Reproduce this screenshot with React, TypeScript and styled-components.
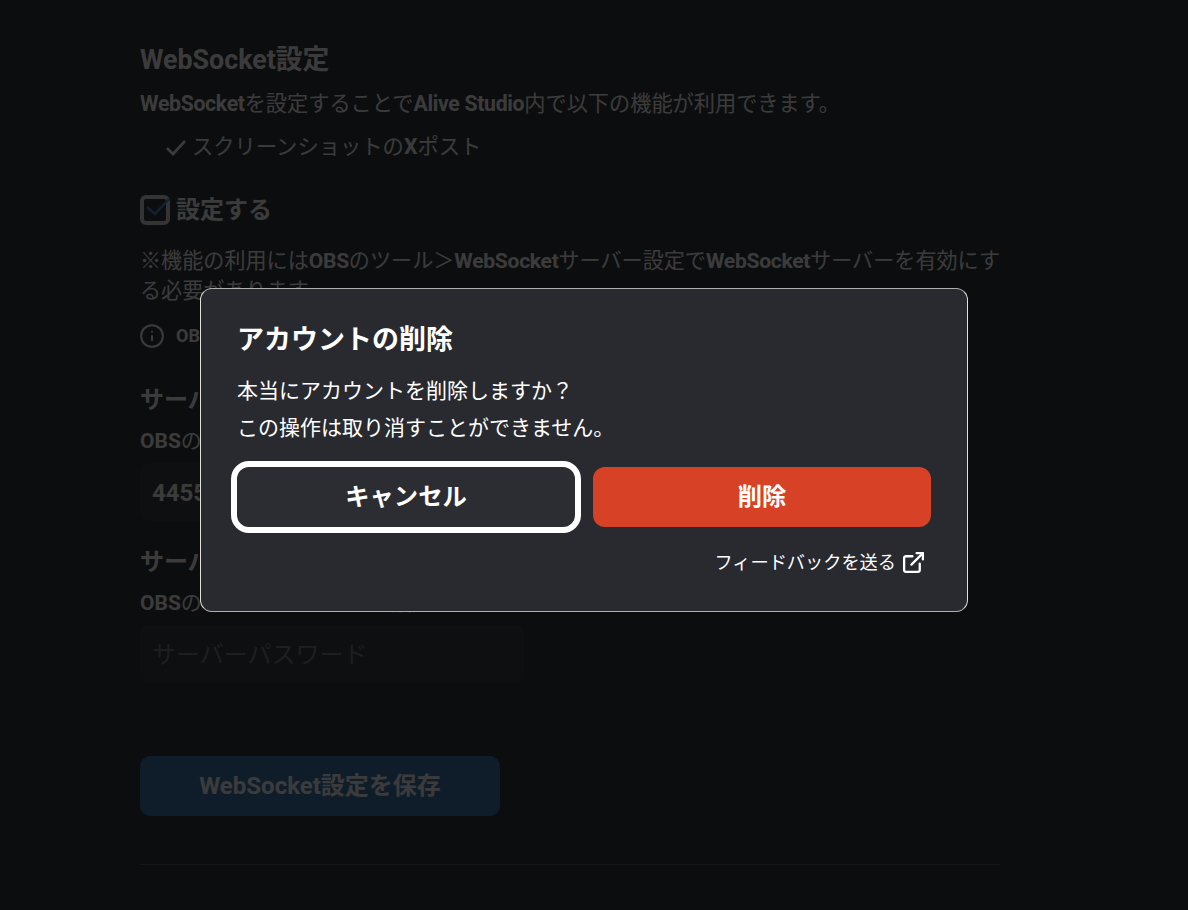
import React from 'react';
import styled, { createGlobalStyle } from 'styled-components';
import { ExternalLink, Info } from 'lucide-react';

const GlobalStyle = createGlobalStyle`
  html, body {
    margin: 0;
    height: 100%;
    overflow: hidden;
    background: #34383f;
  }
  body {
    font-family: Roboto, "Noto Sans CJK JP", sans-serif;
    color: #fff;
  }
  * {
    box-sizing: border-box;
  }
`;

const Page = styled.main`
  width: 860px;
  margin-left: 140px;
  padding-top: 42px;
`;

const Title = styled.h2`
  margin: 0;
  font-size: 26.8px;
  line-height: 36px;
  font-weight: 700;
`;

const Lead = styled.p`
  margin: 11px 0 0;
  font-size: 21.2px;
  line-height: 30px;

  b {
    letter-spacing: -0.3px;
  }
`;

const FeatureList = styled.ul`
  list-style: none;
  margin: 13px 0 0;
  padding: 0 0 0 24px;
`;

const Feature = styled.li`
  display: flex;
  align-items: center;
  gap: 4px;
  font-size: 21.3px;
  line-height: 30px;
`;

const Toggle = styled.label`
  display: flex;
  align-items: center;
  gap: 6px;
  margin-top: 33px;
  font-size: 24px;
  line-height: 30px;
  font-weight: 700;
`;

const CheckBox = styled.span`
  position: relative;
  width: 30px;
  height: 30px;
  border: 4px solid #e0e0e0;
  border-radius: 6px;
  color: #4a90e2;

  svg {
    position: absolute;
    left: 0;
    top: -4px;
  }
`;

const Note = styled.p`
  margin: 21px 0 0;
  font-size: 21.1px;
  line-height: 30px;

  b {
    letter-spacing: -0.3px;
  }
`;

const Hint = styled.div`
  display: flex;
  align-items: center;
  gap: 11px;
  margin: 17px 0 33px;
  font-size: 18px;
  line-height: 24px;
  font-weight: 700;

  svg {
    margin-left: -1px;
  }
`;

const FieldTitle = styled.h3`
  margin: 23px 0 0;
  font-size: 24px;
  line-height: 36px;
  font-weight: 700;
`;

const FieldHelp = styled.p`
  margin: 9px 0 0;
  font-size: 21px;
  line-height: 28px;
`;

const Field = styled.div<{ $muted?: boolean }>`
  display: flex;
  align-items: center;
  width: 384px;
  height: 58px;
  margin-top: 8px;
  padding: ${(p) => (p.$muted ? '0 12px 4px' : '2px 12px 0')};
  border-radius: 8px;
  background: #3c4047;
  font-size: 24px;
  font-weight: ${(p) => (p.$muted ? 400 : 700)};
  color: ${(p) => (p.$muted ? '#82858a' : '#fff')};
`;

const SaveButton = styled.button`
  display: block;
  width: 360px;
  height: 60px;
  margin-top: 73px;
  padding: 0 0 5px;
  border: 0;
  border-radius: 10px;
  background: #4279b7;
  color: #fff;
  font: 700 24px Roboto, "Noto Sans CJK JP", sans-serif;
`;

const Divider = styled.hr`
  margin: 48px 0 0;
  border: 0;
  border-top: 1px solid #5a5e66;
`;

const Overlay = styled.div`
  position: fixed;
  inset: 0;
  display: flex;
  align-items: center;
  justify-content: center;
  padding: 0 20px 10px 0;
  background: rgba(0, 0, 0, 0.77);
`;

const Modal = styled.section`
  width: 768px;
  padding: 29px 36px 36px;
  border: 1px solid #e0e0e0;
  border-top-color: #b0b0b0;
  border-bottom-color: #b0b0b0;
  border-radius: 12px;
  background: #292a30;
`;

const ModalTitle = styled.h2`
  margin: 0;
  font-family: "Noto Sans CJK JP", sans-serif;
  font-size: 27px;
  line-height: 40px;
  font-weight: 700;
`;

const ModalBody = styled.p`
  margin: 13px 0 0;
  font-family: "Noto Sans CJK JP", sans-serif;
  font-size: 21px;
  line-height: 37px;
`;

const Actions = styled.div`
  display: grid;
  grid-template-columns: 1fr 1fr;
  gap: 18px;
  margin-top: 22px;
`;

const ActionButton = styled.button<{ $danger?: boolean }>`
  height: 60px;
  padding: 0 0 5px;
  border: 0;
  border-radius: 12px;
  background: ${(p) => (p.$danger ? '#d74227' : '#2c2d33')};
  color: #fff;
  font: 700 24.3px "Noto Sans CJK JP", sans-serif;
  outline: ${(p) => (p.$danger ? 'none' : '6px solid #fff')};
`;

const FeedbackRow = styled.div`
  display: flex;
  justify-content: flex-end;
  margin-top: 23px;
  padding-right: 5px;
`;

const FeedbackLink = styled.a`
  display: flex;
  align-items: center;
  gap: 5px;
  color: #fff;
  font-family: "Noto Sans CJK JP", sans-serif;
  font-size: 18.2px;
  line-height: 24px;
`;

const FeedbackText = styled.span`
  margin-top: -3px;
`;

export default function App() {
  return (
    <>
      <GlobalStyle />
      <Page>
        <Title>WebSocket設定</Title>
        <Lead><b>WebSocket</b>を設定することで<b>Alive Studio</b>内で以下の機能が利用できます。</Lead>
        <FeatureList>
          <Feature>
            <svg width="24" height="24" viewBox="0 0 24 24" fill="none" stroke="currentColor" strokeWidth="2.6">
              <path d="M3 13l6 6L21 6" />
            </svg>
            <span>スクリーンショットの<b>X</b>ポスト</span>
          </Feature>
        </FeatureList>
        <Toggle>
          <CheckBox>
            <svg width="26" height="26" viewBox="0 0 26 26" fill="none" stroke="currentColor" strokeWidth="2.5">
              <path d="M3 12l8 7L25 4" />
            </svg>
          </CheckBox>
          設定する
        </Toggle>
        <Note>
          ※機能の利用には<b>OBS</b>のツール＞<b>WebSocket</b>サーバー設定で<b>WebSocket</b>サーバーを有効にする必要があります
        </Note>
        <Hint>
          <Info size={26} strokeWidth={1.9} />
          OBSのバージョンをご確認ください
        </Hint>
        <FieldTitle>サーバーポート</FieldTitle>
        <FieldHelp><b>OBS</b>のWebSocketサーバー設定のポート</FieldHelp>
        <Field>4455</Field>
        <FieldTitle>サーバーパスワード</FieldTitle>
        <FieldHelp><b>OBS</b>のWebSocketサーバー設定のパスワード</FieldHelp>
        <Field $muted>サーバーパスワード</Field>
        <SaveButton>WebSocket設定を保存</SaveButton>
        <Divider />
      </Page>
      <Overlay>
        <Modal>
          <ModalTitle>アカウントの削除</ModalTitle>
          <ModalBody>
            本当にアカウントを削除しますか？
            <br />
            この操作は取り消すことができません。
          </ModalBody>
          <Actions>
            <ActionButton>キャンセル</ActionButton>
            <ActionButton $danger>削除</ActionButton>
          </Actions>
          <FeedbackRow>
            <FeedbackLink>
              <FeedbackText>フィードバックを送る</FeedbackText>
              <ExternalLink size={25} strokeWidth={2.2} />
            </FeedbackLink>
          </FeedbackRow>
        </Modal>
      </Overlay>
    </>
  );
}
